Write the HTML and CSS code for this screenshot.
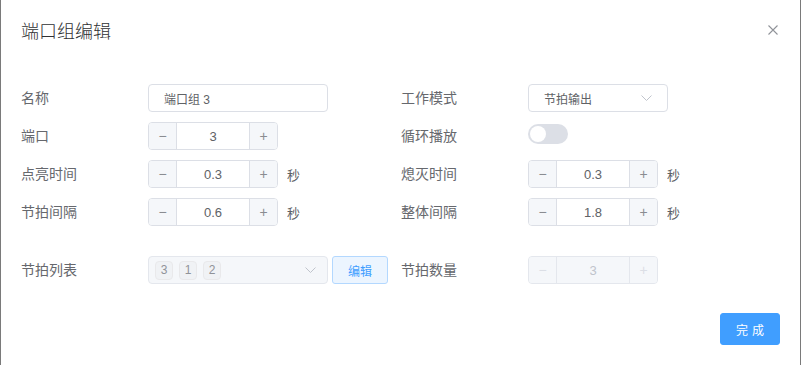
FILE: index.html
```html
<!DOCTYPE html>
<html lang="zh-CN">
<head>
    <meta charset="UTF-8">
    <title>端口组编辑</title>
    <link rel="stylesheet" href="styles.css">
</head>
<body>
    <div class="dialog">
        <header class="dialog-header">
            <div class="dialog-title">端口组编辑</div>
            <button class="dialog-close">
                <svg width="10" height="10" viewBox="0 0 10 10"><path d="M0.5 0.5 L9.5 9.5 M9.5 0.5 L0.5 9.5" stroke="#909399" stroke-width="1.1" fill="none"/></svg>
            </button>
        </header>

        <div class="dialog-body">
            <div class="form-grid">
                <div class="form-item">
                    <label class="form-label">名称</label>
                    <input type="text" class="text-input" value="端口组 3">
                </div>
                <div class="form-item">
                    <label class="form-label">工作模式</label>
                    <div class="select">
                        <span>节拍输出</span>
                        <svg class="chevron" width="11" height="6" viewBox="0 0 11 6"><path d="M0.5 0.5 L5.5 5.5 L10.5 0.5" stroke="#c0c4cc" fill="none"/></svg>
                    </div>
                </div>

                <div class="form-item">
                    <label class="form-label">端口</label>
                    <div class="stepper">
                        <span class="step-btn">−</span>
                        <span class="step-value">3</span>
                        <span class="step-btn">+</span>
                    </div>
                </div>
                <div class="form-item">
                    <label class="form-label">循环播放</label>
                    <span class="switch"><span class="switch-knob"></span></span>
                </div>

                <div class="form-item">
                    <label class="form-label">点亮时间</label>
                    <div class="stepper">
                        <span class="step-btn">−</span>
                        <span class="step-value">0.3</span>
                        <span class="step-btn">+</span>
                    </div>
                    <span class="unit">秒</span>
                </div>
                <div class="form-item">
                    <label class="form-label">熄灭时间</label>
                    <div class="stepper">
                        <span class="step-btn">−</span>
                        <span class="step-value">0.3</span>
                        <span class="step-btn">+</span>
                    </div>
                    <span class="unit">秒</span>
                </div>

                <div class="form-item">
                    <label class="form-label">节拍间隔</label>
                    <div class="stepper">
                        <span class="step-btn">−</span>
                        <span class="step-value">0.6</span>
                        <span class="step-btn">+</span>
                    </div>
                    <span class="unit">秒</span>
                </div>
                <div class="form-item">
                    <label class="form-label">整体间隔</label>
                    <div class="stepper">
                        <span class="step-btn">−</span>
                        <span class="step-value">1.8</span>
                        <span class="step-btn">+</span>
                    </div>
                    <span class="unit">秒</span>
                </div>

                <div class="form-item spaced">
                    <label class="form-label">节拍列表</label>
                    <div class="select multi disabled">
                        <span class="tags">
                            <span class="tag">3</span>
                            <span class="tag">1</span>
                            <span class="tag">2</span>
                        </span>
                        <svg class="chevron" width="11" height="6" viewBox="0 0 11 6"><path d="M0.5 0.5 L5.5 5.5 L10.5 0.5" stroke="#c0c4cc" fill="none"/></svg>
                    </div>
                    <button class="btn btn-plain">编辑</button>
                </div>
                <div class="form-item spaced">
                    <label class="form-label">节拍数量</label>
                    <div class="stepper disabled">
                        <span class="step-btn">−</span>
                        <span class="step-value">3</span>
                        <span class="step-btn">+</span>
                    </div>
                </div>
            </div>
        </div>

        <footer class="dialog-footer">
            <button class="btn btn-primary">完成</button>
        </footer>
    </div>
</body>
</html>
```

FILE: styles.css
```css
* {
    box-sizing: border-box;
    margin: 0;
    padding: 0;
    font-family: 'Liberation Sans', 'Noto Sans CJK SC', sans-serif;
}

body {
    background-color: #fff;
}

.dialog {
    width: 801px;
    height: 365px;
    background-color: #fff;
    border-left: 1px solid #7a7a7a;
    border-right: 1px solid #7a7a7a;
    display: flex;
    flex-direction: column;
}

.dialog-header {
    padding: 20px 20px 10px;
    display: flex;
    justify-content: space-between;
    align-items: flex-start;
}

.dialog-title {
    font-size: 18px;
    line-height: 24px;
    color: #303133;
    font-weight: 300;
}

.dialog-close {
    border: none;
    background: transparent;
    width: 10px;
    height: 10px;
    margin-top: 5px;
    margin-right: 2px;
    display: flex;
}

.dialog-body {
    padding: 30px 20px 0;
}

.form-grid {
    display: grid;
    grid-template-columns: 380px 1fr;
    row-gap: 10px;
}

.form-item {
    display: flex;
    align-items: center;
    height: 28px;
}

.form-item.spaced {
    margin-top: 20px;
}

.form-label {
    width: 127px;
    font-size: 14px;
    color: #66686d;
    margin-top: -2px;
}

.text-input {
    width: 180px;
    height: 28px;
    border: 1px solid #dcdfe6;
    border-radius: 4px;
    padding: 0 15px;
    font-size: 12px;
    color: #606266;
    outline: none;
}

.select {
    width: 140px;
    height: 28px;
    border: 1px solid #dcdfe6;
    border-radius: 4px;
    padding: 0 15px;
    font-size: 12px;
    color: #606266;
    display: flex;
    align-items: center;
    justify-content: space-between;
}

.select.multi {
    width: 180px;
    padding: 0 11px 0 6px;
}

.select.disabled {
    background-color: #f5f7fa;
    border-color: #e4e7ed;
}

.tags {
    display: flex;
    gap: 6px;
}

.tag {
    width: 18px;
    height: 19px;
    border: 1px solid #e9e9eb;
    border-radius: 4px;
    background-color: #f0f2f5;
    color: #909399;
    font-size: 12px;
    display: flex;
    align-items: center;
    justify-content: center;
}

.stepper {
    width: 130px;
    height: 28px;
    border: 1px solid #dcdfe6;
    border-radius: 4px;
    display: flex;
    overflow: hidden;
    font-size: 13px;
    color: #606266;
}

.step-btn {
    width: 28px;
    background-color: #f5f7fa;
    display: flex;
    align-items: center;
    justify-content: center;
    font-size: 14px;
    color: #8a8c91;
}

.step-btn:first-child {
    border-right: 1px solid #dcdfe6;
}

.step-btn:last-child {
    border-left: 1px solid #dcdfe6;
}

.step-value {
    flex: 1;
    display: flex;
    align-items: center;
    justify-content: center;
}

.stepper.disabled {
    border-color: #e4e7ed;
    background-color: #f5f7fa;
    color: #c0c4cc;
}

.stepper.disabled .step-btn {
    border-color: #e4e7ed;
    color: #dcdfe6;
}

.unit {
    margin-left: 9px;
    font-size: 13px;
    color: #606266;
}

.switch {
    width: 40px;
    height: 20px;
    border-radius: 10px;
    background-color: #dcdfe6;
    display: flex;
    align-items: center;
    padding: 0 2px;
    margin-top: -4px;
}

.switch-knob {
    width: 16px;
    height: 16px;
    border-radius: 50%;
    background-color: #fff;
}

.btn {
    border-radius: 3px;
    font-size: 12px;
    cursor: pointer;
}

.btn-plain {
    width: 56px;
    height: 28px;
    margin-left: 4px;
    background-color: #ecf5ff;
    border: 1px solid #b3d8ff;
    color: #409eff;
}

.btn-primary {
    width: 60px;
    height: 32px;
    background-color: #409eff;
    border: 1px solid #409eff;
    color: #fff;
    letter-spacing: 4px;
    padding-left: 4px;
}

.dialog-footer {
    display: flex;
    justify-content: flex-end;
    padding: 29px 20px 0;
}
```
